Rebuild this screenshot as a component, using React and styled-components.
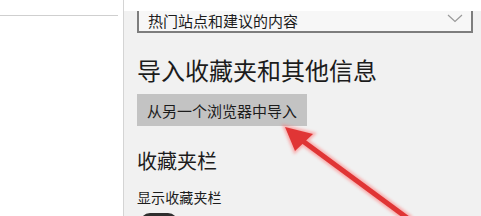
import React from 'react';
import styled, { createGlobalStyle } from 'styled-components';

const GlobalStyle = createGlobalStyle`
  html, body {
    margin: 0;
    padding: 0;
    background: #fff;
    overflow: hidden;
  }
  body {
    font-family: "Noto Sans CJK SC", "Noto Sans", sans-serif;
  }
`;

const Page = styled.div`
  position: relative;
  display: flex;
  width: 481px;
  height: 216px;
  overflow: hidden;
`;

const Sidebar = styled.div`
  width: 123px;
  flex-shrink: 0;
  padding-top: 15px;
  background: #fff;
  .rule {
    width: 118px;
    height: 1px;
    background: #cfcfcf;
  }
`;

const Panel = styled.div`
  flex: 1;
  display: flex;
  flex-direction: column;
  border-left: 1px solid #d4d4d4;
  background: #f1f1f1;
  padding: 0 8px 0 13px;
  color: #1c1c1c;
  & > * {
    flex-shrink: 0;
  }
`;

const TopStrip = styled.div`
  height: 11px;
  margin: 0 -8px 0 -13px;
  background: #fff;
`;

const Select = styled.div`
  height: 20px;
  display: flex;
  align-items: center;
  justify-content: space-between;
  border: 2px solid #7d7d7d;
  border-top: none;
  background: #f7f7f7;
  padding: 0 8px 0 9px;
  font-size: 15px;
  line-height: 18px;
  svg {
    margin-top: -6px;
  }
`;

const Heading = styled.div`
  margin-top: 21px;
  font-size: 24px;
  line-height: 32px;
`;

const Button = styled.div`
  margin-top: 8px;
  align-self: flex-start;
  height: 32px;
  padding: 0 10px;
  display: flex;
  align-items: center;
  background: #c3c3c3;
  font-size: 15px;
`;

const SubHeading = styled.div`
  margin-top: 21px;
  font-size: 20px;
  line-height: 28px;
`;

const Label = styled.div`
  margin-top: 12px;
  font-size: 14px;
  line-height: 20px;
  letter-spacing: 0.1px;
`;

const Toggle = styled.div`
  margin-top: 6px;
  margin-left: 3px;
  width: 38px;
  height: 20px;
  border-radius: 10px;
  background: #2e2e2e;
`;

const Arrow = styled.svg`
  position: absolute;
  left: 0;
  top: 0;
  pointer-events: none;
`;

export default function App() {
  return (
    <>
      <GlobalStyle />
      <Page>
        <Sidebar>
          <div className="rule" />
        </Sidebar>
        <Panel>
          <TopStrip />
          <Select>
            <span>热门站点和建议的内容</span>
            <svg width="16" height="9" viewBox="0 0 16 9">
              <path d="M1 1 L8 7.5 L15 1" fill="none" stroke="#9a9a9a" strokeWidth="1.2" />
            </svg>
          </Select>
          <Heading>导入收藏夹和其他信息</Heading>
          <Button>从另一个浏览器中导入</Button>
          <SubHeading>收藏夹栏</SubHeading>
          <Label>显示收藏夹栏</Label>
          <Toggle />
        </Panel>
        <Arrow width="481" height="216" viewBox="0 0 481 216">
          <defs>
            <filter id="glow" x="-20%" y="-20%" width="140%" height="140%">
              <feGaussianBlur stdDeviation="1.4" />
            </filter>
          </defs>
          <g filter="url(#glow)" opacity="0.5">
            <path d="M296 136 L410 220" stroke="#ff6a6a" strokeWidth="9" />
            <path d="M285 127 L313 134 L295 151 Z" fill="#ff6a6a" stroke="#ff6a6a" strokeWidth="4" />
          </g>
          <path d="M296 136 L410 220" stroke="#e03535" strokeWidth="5" />
          <path d="M285 127 L313 134 L295 151 Z" fill="#e03535" />
        </Arrow>
      </Page>
    </>
  );
}
